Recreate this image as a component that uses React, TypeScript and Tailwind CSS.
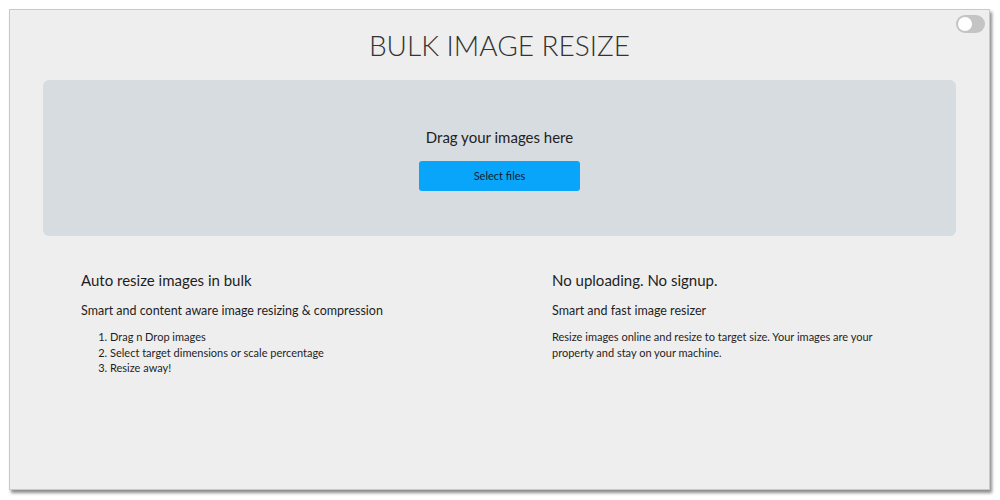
import React from "react";

export default function App() {
  return (
    <div className="h-[500px] w-[1000px] bg-white p-[9px] pr-[10px] pb-[10px]" style={{ fontFamily: "Lato, sans-serif" }}>
      <div className="relative h-full border border-[#c9c9c9] bg-[#eeeeee] shadow-[2px_3px_3px_rgba(0,0,0,0.45)]">
        {/* theme toggle */}
        <div className="absolute right-[4px] top-[5px] flex h-[18px] w-[29px] items-center rounded-full bg-[#c4c4c4] px-[2px]">
          <div className="h-[14px] w-[14px] rounded-full bg-white" />
        </div>

        <h1 className="pt-[15px] text-center text-[28px] font-light leading-[40px] text-[#333]">
          BULK IMAGE RESIZE
        </h1>

        <div className="mx-[33px] mt-[15px] flex h-[156px] flex-col items-center rounded-[6px] bg-[#d7dce0] pt-[46px]">
          <p className="text-[15px] leading-[22px] text-[#222]">Drag your images here</p>
          <button className="mt-[13px] h-[30px] w-[161px] rounded-[3px] bg-[#08a5fb] text-[11px] text-[#102030]">
            Select files
          </button>
        </div>

        <div className="mt-[33px] grid grid-cols-[471px_1fr] pl-[71px] text-[#1e1e1e]">
          <div>
            <h2 className="text-[15px] leading-[22px]">Auto resize images in bulk</h2>
            <p className="mt-[11px] text-[12.5px] leading-[18px]">Smart and content aware image resizing &amp; compression</p>
            <ol className="mt-[9px] list-decimal pl-[29px] text-[11px] leading-[15.5px]">
              <li>Drag n Drop images</li>
              <li>Select target dimensions or scale percentage</li>
              <li>Resize away!</li>
            </ol>
          </div>
          <div>
            <h2 className="text-[15px] leading-[22px]">No uploading. No signup.</h2>
            <p className="mt-[11px] text-[12.5px] leading-[18px]">Smart and fast image resizer</p>
            <p className="mt-[9px] w-[330px] text-[11px] leading-[16px]">
              Resize images online and resize to target size. Your images are your property and stay on your machine.
            </p>
          </div>
        </div>
      </div>
    </div>
  );
}
